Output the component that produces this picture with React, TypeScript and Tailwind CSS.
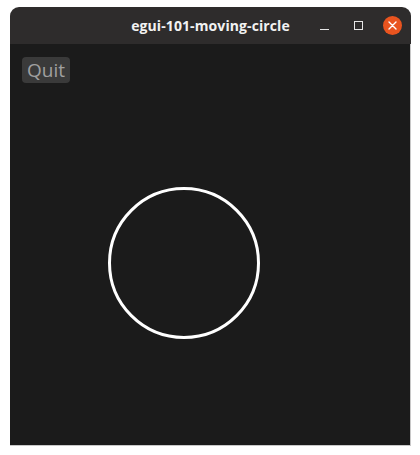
import React from 'react';

const TitleBar: React.FC = () => (
  <div className="relative flex h-[37px] items-center justify-center rounded-t-[9px] bg-[#2e2c2c]">
    <span
      className="text-[14px] font-bold tracking-[0.1px] text-[#f2f2f2]"
      style={{ fontFamily: '"Open Sans", "DejaVu Sans", sans-serif' }}
    >
      egui-101-moving-circle
    </span>
    <div className="absolute right-[2px] top-0 flex h-full items-center">
      <div className="flex h-[20px] w-[34px] items-center justify-center">
        <div className="mt-[8px] h-[1.5px] w-[9px] bg-[#e6e6e6]" />
      </div>
      <div className="flex h-[20px] w-[34px] items-center justify-center">
        <div className="h-[9px] w-[9px] border-[1.5px] border-[#e6e6e6]" />
      </div>
      <div className="flex h-[20px] w-[34px] items-center justify-center">
        <div className="flex h-[19px] w-[19px] items-center justify-center rounded-full bg-[#e9541f]">
          <svg width="9" height="9" viewBox="0 0 9 9">
            <path d="M1 1 L8 8 M8 1 L1 8" stroke="#ffffff" strokeWidth="1.4" strokeLinecap="round" />
          </svg>
        </div>
      </div>
    </div>
  </div>
);

export default function App() {
  return (
    <div className="h-[455px] w-[420px] bg-white pl-[10px] pt-[7px]">
      <div className="flex h-[439px] w-[401px] flex-col">
        <TitleBar />
        <div className="flex-1 border-b border-r border-[#c8c8c8] bg-[#1b1b1b] px-[12px] pt-[13px]">
          <button
            className="flex h-[26px] w-[48px] items-center justify-center rounded-[4px] bg-[#3a3a3a] text-[19px] leading-none text-[#a0a0a0]"
            style={{ fontFamily: '"Open Sans", "DejaVu Sans", sans-serif' }}
          >
            Quit
          </button>
          <svg width="160" height="160" viewBox="0 0 160 160" className="ml-[84px] mt-[101px] block">
            <circle cx="78" cy="79" r="74.5" fill="none" stroke="#ffffff" strokeWidth="3" />
          </svg>
        </div>
      </div>
    </div>
  );
}
